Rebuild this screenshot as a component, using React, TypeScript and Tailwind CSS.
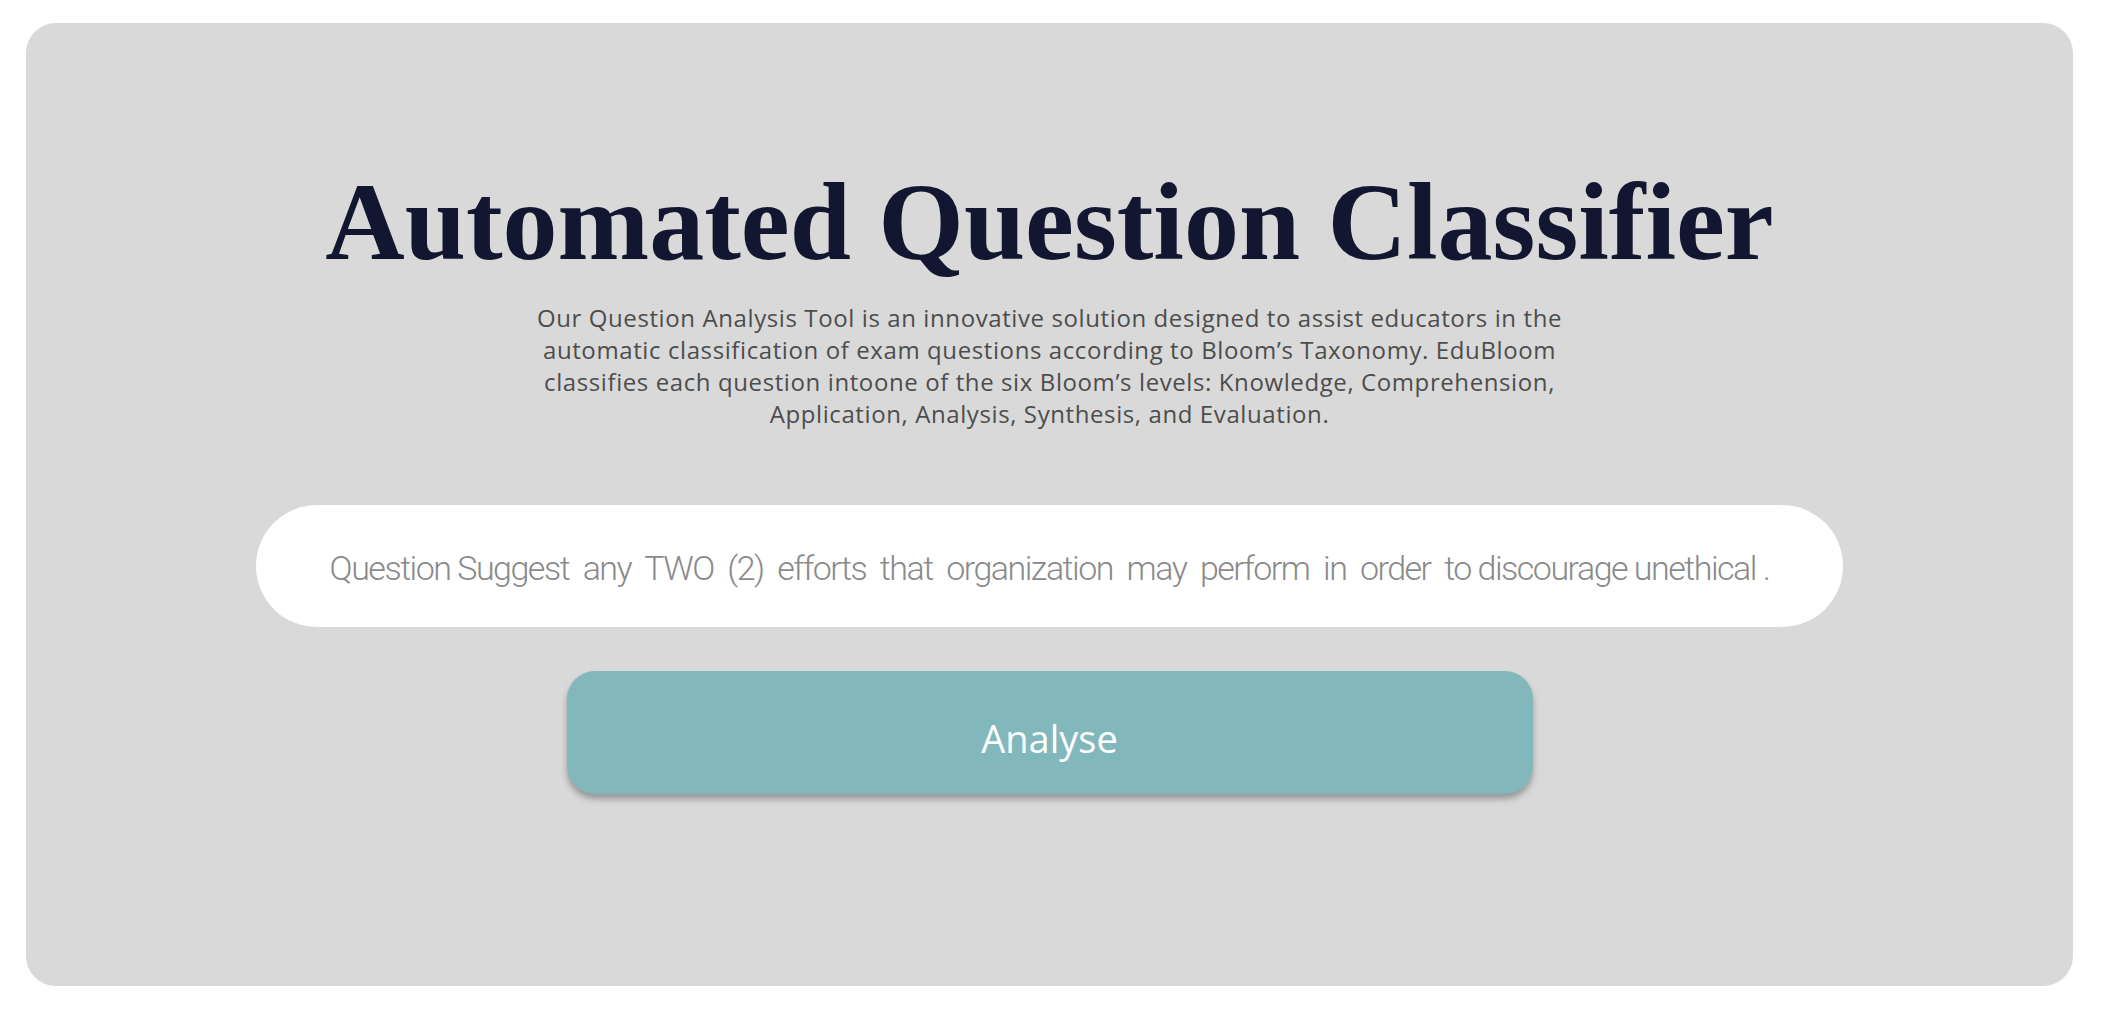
export default function App() {
  return (
    <div className="min-h-screen bg-white pt-[23px] pl-[26px] pr-[31px]">
      <div className="flex h-[963px] w-full flex-col items-center rounded-[30px] bg-[#d9d9d9] pt-[144px]">
        <h1 className="font-['Liberation_Serif',serif] text-[110px] font-bold leading-none text-[#131630]">
          Automated Question Classifier
        </h1>
        <p className="mt-[25px] text-center font-['Open_Sans',sans-serif] text-[24px] leading-[32px] tracking-[0.6px] text-[#4d4d4d]">
          Our Question Analysis Tool is an innovative solution designed to assist educators in the
          <br />
          automatic classification of exam questions according to Bloom’s Taxonomy. EduBloom
          <br />
          classifies each question intoone of the six Bloom’s levels: Knowledge, Comprehension,
          <br />
          Application, Analysis, Synthesis, and Evaluation.
        </p>
        <div className="mt-[75px] flex h-[122px] w-[1587px] items-center justify-center rounded-full bg-white pt-[5px]">
          <span className="whitespace-pre font-['Roboto',sans-serif] text-[34px] font-light tracking-[-1.5px] text-[#8a8a8a]">
            {"Question Suggest  any  TWO  (2)  efforts  that  organization  may  perform  in  order  to discourage unethical ."}
          </span>
        </div>
        <button
          type="button"
          className="mt-[44px] flex h-[123px] w-[966px] items-center justify-center rounded-[28px] bg-[#82b8bb] pt-[12px] font-['Open_Sans',sans-serif] text-[38px] text-white shadow-[0_5px_6px_rgba(0,0,0,0.3)]"
        >
          Analyse
        </button>
      </div>
    </div>
  );
}
